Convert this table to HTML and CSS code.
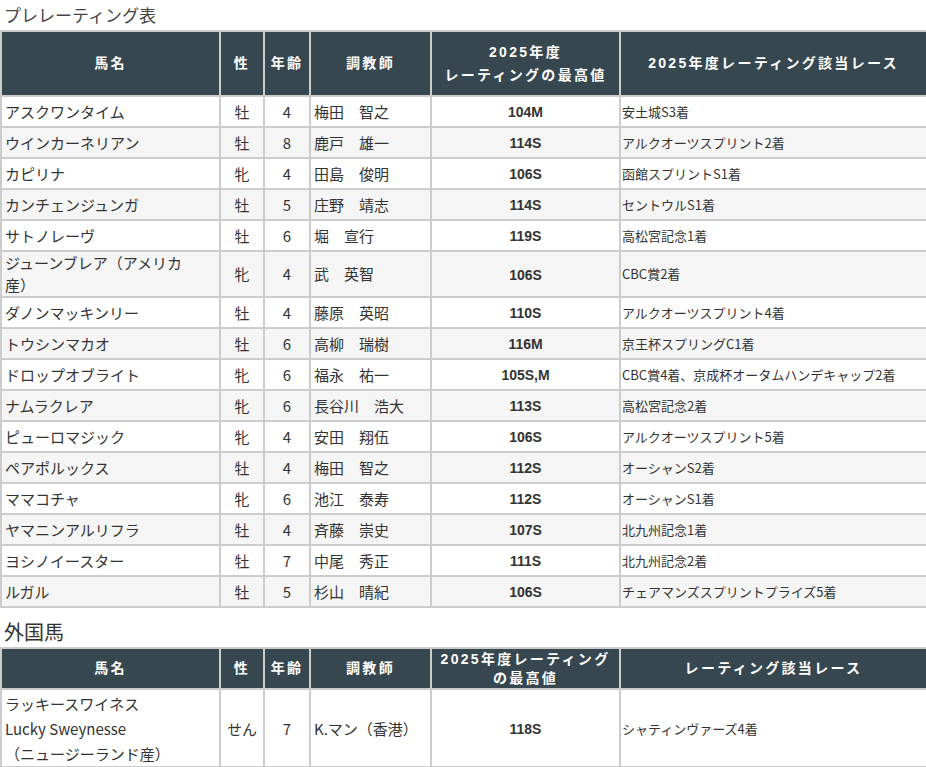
FILE: index.html
```html
<!DOCTYPE html>
<html lang="ja">
<head>
<meta charset="utf-8">
<title>プレレーティング表</title>
<link rel="stylesheet" href="styles.css">
</head>
<body>
<h2 class="title">プレレーティング表</h2>
<table class="rt">
  <colgroup>
    <col class="c-name"><col class="c-sex"><col class="c-age"><col class="c-trainer"><col class="c-rate"><col class="c-race">
  </colgroup>
  <thead>
    <tr class="head-main">
      <th>馬名</th><th>性</th><th>年齢</th><th>調教師</th><th>2025年度<br>レーティングの最高値</th><th>2025年度レーティング該当レース</th>
    </tr>
  </thead>
  <tbody>
    <tr><td>アスクワンタイム</td><td class="ctr">牡</td><td class="ctr">4</td><td>梅田　智之</td><td class="rate">104M</td><td class="race">安土城S3着</td></tr>
    <tr><td>ウインカーネリアン</td><td class="ctr">牡</td><td class="ctr">8</td><td>鹿戸　雄一</td><td class="rate">114S</td><td class="race">アルクオーツスプリント2着</td></tr>
    <tr><td>カピリナ</td><td class="ctr">牝</td><td class="ctr">4</td><td>田島　俊明</td><td class="rate">106S</td><td class="race">函館スプリントS1着</td></tr>
    <tr><td>カンチェンジュンガ</td><td class="ctr">牡</td><td class="ctr">5</td><td>庄野　靖志</td><td class="rate">114S</td><td class="race">セントウルS1着</td></tr>
    <tr><td>サトノレーヴ</td><td class="ctr">牡</td><td class="ctr">6</td><td>堀　宣行</td><td class="rate">119S</td><td class="race">高松宮記念1着</td></tr>
    <tr class="two"><td>ジューンブレア（アメリカ<br>産）</td><td class="ctr">牝</td><td class="ctr">4</td><td>武　英智</td><td class="rate">106S</td><td class="race">CBC賞2着</td></tr>
    <tr><td>ダノンマッキンリー</td><td class="ctr">牡</td><td class="ctr">4</td><td>藤原　英昭</td><td class="rate">110S</td><td class="race">アルクオーツスプリント4着</td></tr>
    <tr><td>トウシンマカオ</td><td class="ctr">牡</td><td class="ctr">6</td><td>高柳　瑞樹</td><td class="rate">116M</td><td class="race">京王杯スプリングC1着</td></tr>
    <tr><td>ドロップオブライト</td><td class="ctr">牝</td><td class="ctr">6</td><td>福永　祐一</td><td class="rate">105S,M</td><td class="race">CBC賞4着、京成杯オータムハンデキャップ2着</td></tr>
    <tr><td>ナムラクレア</td><td class="ctr">牝</td><td class="ctr">6</td><td>長谷川　浩大</td><td class="rate">113S</td><td class="race">高松宮記念2着</td></tr>
    <tr><td>ピューロマジック</td><td class="ctr">牝</td><td class="ctr">4</td><td>安田　翔伍</td><td class="rate">106S</td><td class="race">アルクオーツスプリント5着</td></tr>
    <tr><td>ペアポルックス</td><td class="ctr">牡</td><td class="ctr">4</td><td>梅田　智之</td><td class="rate">112S</td><td class="race">オーシャンS2着</td></tr>
    <tr><td>ママコチャ</td><td class="ctr">牝</td><td class="ctr">6</td><td>池江　泰寿</td><td class="rate">112S</td><td class="race">オーシャンS1着</td></tr>
    <tr><td>ヤマニンアルリフラ</td><td class="ctr">牡</td><td class="ctr">4</td><td>斉藤　崇史</td><td class="rate">107S</td><td class="race">北九州記念1着</td></tr>
    <tr><td>ヨシノイースター</td><td class="ctr">牡</td><td class="ctr">7</td><td>中尾　秀正</td><td class="rate">111S</td><td class="race">北九州記念2着</td></tr>
    <tr><td>ルガル</td><td class="ctr">牡</td><td class="ctr">5</td><td>杉山　晴紀</td><td class="rate">106S</td><td class="race">チェアマンズスプリントプライズ5着</td></tr>
  </tbody>
</table>

<h3 class="subtitle">外国馬</h3>
<table class="rt">
  <colgroup>
    <col class="c-name"><col class="c-sex"><col class="c-age"><col class="c-trainer"><col class="c-rate"><col class="c-race">
  </colgroup>
  <thead>
    <tr class="head-sub">
      <th>馬名</th><th>性</th><th>年齢</th><th>調教師</th><th>2025年度レーティング<br>の最高値</th><th>レーティング該当レース</th>
    </tr>
  </thead>
  <tbody>
    <tr class="three"><td>ラッキースワイネス<br>Lucky Sweynesse<br>（ニュージーランド産）</td><td class="ctr">せん</td><td class="ctr">7</td><td>K.マン（香港）</td><td class="rate">118S</td><td class="race">シャティンヴァーズ4着</td></tr>
  </tbody>
</table>
</body>
</html>
```

FILE: styles.css
```css
html, body {
  margin: 0;
  padding: 0;
  background: #fff;
}
body {
  font-family: "Noto Sans CJK JP", "Noto Sans", sans-serif;
  color: #333;
  width: 926px;
}
.title {
  margin: 0;
  padding: 4px 0 0 4px;
  height: 30px;
  box-sizing: border-box;
  font-size: 17px;
  font-weight: normal;
  line-height: 22px;
  color: #444;
}
.subtitle {
  margin: 0;
  padding: 11px 0 0 4px;
  height: 39px;
  box-sizing: border-box;
  font-size: 20px;
  font-weight: normal;
  line-height: 26px;
  color: #333;
}
.rt {
  width: 926px;
  border-collapse: collapse;
  table-layout: fixed;
  border: 2px solid #ccc;
}
.c-name { width: 219px; }
.c-sex { width: 44px; }
.c-age { width: 46px; }
.c-trainer { width: 121px; }
.c-rate { width: 189px; }
.c-race { width: 307px; }

.rt th {
  background: #37474f;
  color: #fff;
  font-family: "Liberation Sans", "Noto Sans CJK JP", sans-serif;
  font-weight: bold;
  font-size: 14px;
  letter-spacing: 2.3px;
  border: 2px solid #ccc;
  text-align: center;
  padding: 0 2px;
  line-height: 23px;
}
.head-main th { height: 63px; }
.head-sub th { height: 39px; line-height: 19px; }

.rt td {
  border: 2px solid #ccc;
  font-size: 15px;
  line-height: 23px;
  height: 31px;
  padding: 0 3px;
  box-sizing: border-box;
  vertical-align: middle;
}
.rt tbody tr:nth-child(even) td { background: #f5f5f5; }
.rt td.ctr { text-align: center; }
.rt td.rate {
  text-align: center;
  font-family: "Liberation Sans", "Noto Sans CJK JP", sans-serif;
  font-weight: bold;
  font-size: 14px;
  padding-top: 2px;
}
.rt td.race {
  font-size: 13px;
  padding-left: 1px;
}
.rt tr.two td { line-height: 22px; height: 45px; }
.rt tr.three td { line-height: 25px; height: 78px; }
```
